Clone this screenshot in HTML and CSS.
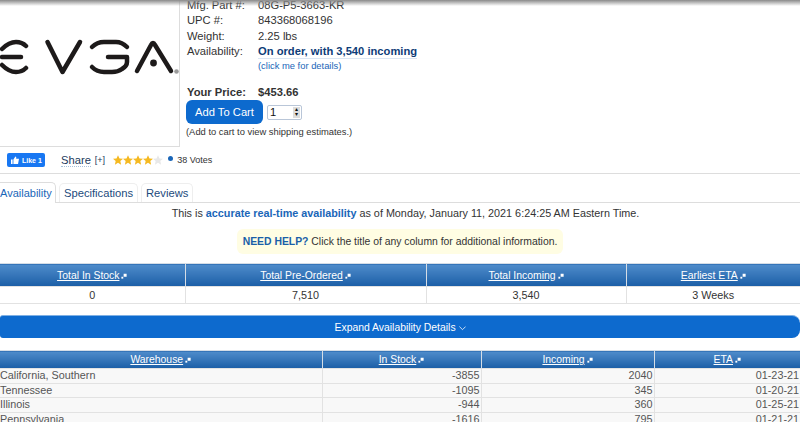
FILE: index.html
```html
<!DOCTYPE html>
<html lang="en">

<head>
    <meta charset="UTF-8">
    <title>EVGA 08G-P5-3663-KR</title>
    <link rel="stylesheet" href="styles.css">
</head>

<body>
    <svg class="defs" width="0" height="0">
        <symbol id="star" viewBox="0 0 20 20">
            <polygon points="10,0.500 13,7 20,7.700 14.700,12.200 16.200,19.500 10,15.700 3.800,19.500 5.300,12.200 0,7.700 7,7"></polygon>
        </symbol>
        <symbol id="sort" viewBox="0 0 8 8">
            <rect x="3.500" y="1" width="4" height="4"></rect>
            <rect x="0.500" y="5" width="2.500" height="2.500"></rect>
        </symbol>
    </svg>
    <div class="top-shadow"></div>
    <div class="page">
        <div class="product">
            <div class="product-image">
                <svg class="logo" width="180" height="80" viewBox="0 0 180 80">
                    <g fill="none" stroke="#1d1a1a" stroke-width="4.500" stroke-linecap="round" stroke-linejoin="round">
                        <path d="M2 49Q9 42 16 42Q22 42 26 46"></path>
                        <path d="M2 57H21"></path>
                        <path d="M2 65Q9 72 16 72Q22 72 26 68"></path>
                        <path d="M47.500 42L62.500 72L80 42"></path>
                        <path d="M92 47Q97 42 104 42H116Q122 42 127 47"></path>
                        <path d="M108 57H127V62Q127 66 122 69Q118 72 112 72H104Q97 72 92 67"></path>
                        <path d="M137 71L151 45Q153 41 155 45L171 71"></path>
                    </g>
                    <circle cx="153.500" cy="63" r="3.400" fill="#1d1a1a"></circle>
                    <circle cx="176.500" cy="71.500" r="2.300" fill="#9a9a9a"></circle>
                </svg>
            </div>
            <div class="product-info">
                <div class="spec-row"><span class="spec-label">Mfg. Part #:</span><span>08G-P5-3663-KR</span></div>
                <div class="spec-row"><span class="spec-label">UPC #:</span><span>843368068196</span></div>
                <div class="spec-row"><span class="spec-label">Weight:</span><span>2.25 lbs</span></div>
                <div class="spec-row"><span class="spec-label">Availability:</span><a class="stock-link">On order, with 3,540 incoming</a></div>
                <div class="spec-row details-row"><span class="spec-label"></span><a class="details-link">(click me for details)</a></div>
                <div class="spec-row price-row"><span class="spec-label">Your Price:</span><span>$453.66</span></div>
                <div class="cart-row">
                    <button class="cart-button">Add To Cart</button>
                    <div class="qty">
                        <span>1</span>
                        <span class="qty-spin"><i>&#9652;</i><i>&#9662;</i></span>
                    </div>
                </div>
                <p class="cart-note">(Add to cart to view shipping estimates.)</p>
            </div>
        </div>

        <div class="social">
            <span class="like">
                <svg width="8" height="8" viewBox="0 0 10 10"><path fill="#fff" d="M0 4.500H2V10H0ZM3 4.500L5.500 0.500Q7 0.500 6.500 3.500H10L8.800 10H3Z"></path></svg>
                Like 1
            </span>
            <span class="share">Share</span>
            <span class="share-more">[+]</span>
            <span class="stars">
                <svg class="star"><use href="#star"></use></svg>
                <svg class="star"><use href="#star"></use></svg>
                <svg class="star"><use href="#star"></use></svg>
                <svg class="star"><use href="#star"></use></svg>
                <svg class="star star-off"><use href="#star"></use></svg>
            </span>
            <span class="info-dot"></span>
            <span class="votes">38 Votes</span>
        </div>

        <div class="tabs">
            <a class="tab tab-active">Availability</a>
            <a class="tab">Specifications</a>
            <a class="tab">Reviews</a>
        </div>

        <p class="realtime">This is <b>accurate real-time availability</b> as of Monday, January 11, 2021 6:24:25 AM Eastern Time.</p>

        <div class="help-wrap">
            <div class="help"><b>NEED HELP?</b> Click the title of any column for additional information.</div>
        </div>

        <table class="grid totals">
            <colgroup>
                <col class="t1"><col class="t2"><col class="t3"><col class="t4">
            </colgroup>
            <thead>
                <tr>
                    <th><a>Total In Stock</a><svg class="sort"><use href="#sort"></use></svg></th>
                    <th><a>Total Pre-Ordered</a><svg class="sort"><use href="#sort"></use></svg></th>
                    <th><a>Total Incoming</a><svg class="sort"><use href="#sort"></use></svg></th>
                    <th><a>Earliest ETA</a><svg class="sort"><use href="#sort"></use></svg></th>
                </tr>
            </thead>
            <tbody>
                <tr>
                    <td>0</td>
                    <td>7,510</td>
                    <td>3,540</td>
                    <td>3 Weeks</td>
                </tr>
            </tbody>
        </table>

        <button class="expand">Expand Availability Details
            <svg width="7" height="5" viewBox="0 0 9 6"><path fill="none" stroke="#fff" d="M0.500 0.500L4.500 4.500L8.500 0.500"></path></svg>
        </button>

        <table class="grid warehouses">
            <colgroup>
                <col class="w1"><col class="w2"><col class="w3"><col class="w4">
            </colgroup>
            <thead>
                <tr>
                    <th><a>Warehouse</a><svg class="sort"><use href="#sort"></use></svg></th>
                    <th><a>In Stock</a><svg class="sort"><use href="#sort"></use></svg></th>
                    <th><a>Incoming</a><svg class="sort"><use href="#sort"></use></svg></th>
                    <th><a>ETA</a><svg class="sort"><use href="#sort"></use></svg></th>
                </tr>
            </thead>
            <tbody>
                <tr><td>California, Southern</td><td>-3855</td><td>2040</td><td>01-23-21</td></tr>
                <tr><td>Tennessee</td><td>-1095</td><td>345</td><td>01-20-21</td></tr>
                <tr><td>Illinois</td><td>-944</td><td>360</td><td>01-25-21</td></tr>
                <tr><td>Pennsylvania</td><td>-1616</td><td>795</td><td>01-21-21</td></tr>
            </tbody>
        </table>
    </div>
</body>

</html>
```

FILE: styles.css
```css
* {
    margin: 0px;
    padding: 0px;
    box-sizing: border-box;
}

html,
body {
    height: 422px;
    overflow: hidden;
}

body {
    font-family: "Liberation Sans", Arial, sans-serif;
    font-size: 11.200px;
    color: #333;
    background: #fff;
}

.defs {
    display: block;
    height: 0;
}

.top-shadow {
    position: absolute;
    top: 0;
    left: 0;
    width: 100%;
    height: 6px;
    background: linear-gradient(#8a8a8a, rgba(255, 255, 255, 0));
}

/* the page is scrolled, the top of the product block is cut off */
.page {
    margin-top: -3px;
}

.product {
    display: flex;
    height: 150px;
}

.product-image {
    width: 180px;
    height: 150px;
    border-right: 1px solid #ddd;
    border-bottom: 1px solid #ddd;
}

.logo {
    display: block;
    margin-top: 3px;
}

.product-info {
    margin-left: 6px;
    padding-left: 1px;
    padding-top: 0.500px;
}

.spec-row {
    display: flex;
    height: 15.500px;
    line-height: 15px;
}

.spec-label {
    width: 71px;
}

.stock-link {
    font-weight: bold;
    color: #0d3c78;
    border-bottom: 1px solid #dbe6f3;
    line-height: 14px;
    height: 15px;
}

.details-row {
    font-size: 9.400px;
    line-height: 12px;
    margin-bottom: 9.500px;
}

.details-link {
    color: #1a66b8;
}

.price-row {
    font-weight: bold;
}

.cart-row {
    display: flex;
    align-items: center;
    margin-left: -1px;
}

.cart-button {
    width: 77px;
    height: 24px;
    border: 0;
    border-radius: 6px;
    background: #0d6ace;
    color: #fff;
    font-family: inherit;
    font-size: 11.200px;
}

.qty {
    display: flex;
    align-items: center;
    justify-content: space-between;
    width: 35px;
    height: 15px;
    margin-left: 4px;
    padding: 0 1px 0 2px;
    border: 1px solid #b9c6d8;
    border-radius: 2px;
    color: #111;
}

.qty-spin {
    display: flex;
    flex-direction: column;
    width: 7px;
    height: 11px;
    background: #ddd;
}

.qty-spin i {
    height: 5.500px;
    font-size: 6px;
    font-style: normal;
    line-height: 5px;
    text-align: center;
}

.cart-note {
    margin-top: 1px;
    margin-left: -1px;
    font-size: 9.400px;
    line-height: 13px;
}

.social {
    display: flex;
    align-items: center;
    height: 27px;
    padding-left: 7px;
    border-bottom: 1px solid #ddd;
}

.like {
    display: flex;
    align-items: center;
    gap: 3px;
    width: 38px;
    height: 14px;
    padding-left: 4px;
    border-radius: 2px;
    background: #1877f2;
    color: #fff;
    font-size: 7px;
    font-weight: bold;
    white-space: nowrap;
}

.share {
    margin-left: 16px;
    color: #1b3a5c;
    border-bottom: 1px dotted #a8c0da;
}

.share-more {
    margin-left: 4px;
    font-size: 9px;
    color: #1b3a5c;
}

.stars {
    display: flex;
    margin-left: 8px;
}

.star {
    width: 10px;
    height: 10px;
    fill: #f5b921;
}

.star-off {
    fill: #e8e8e8;
}

.info-dot {
    width: 5px;
    height: 5px;
    margin-left: 5px;
    margin-top: -3px;
    border-radius: 50%;
    background: #1a66b8;
}

.votes {
    margin-left: 4px;
    font-size: 9px;
}

.tabs {
    display: flex;
    align-items: flex-end;
    gap: 3px;
    height: 20px;
    margin-top: 9px;
    border-bottom: 1px solid #ddd;
}

.tab {
    height: 19px;
    padding: 0 4px;
    line-height: 19px;
    color: #1b4a7c;
    border: 1px solid #eee;
    border-bottom: 0;
    border-radius: 5px 5px 0 0;
}

.tab-active {
    width: 56px;
    height: 21px;
    margin-bottom: -1px;
    padding: 0;
    background: #fff;
    line-height: 20px;
    font-size: 11px;
    color: #1a66b8;
    border-color: #ddd;
    border-left: 0;
    border-radius: 0 5px 0 0;
}

.realtime {
    margin-top: 3px;
    padding-left: 11px;
    line-height: 14px;
    font-size: 10.800px;
    text-align: center;
}

.realtime b {
    color: #1a66b8;
}

.help-wrap {
    display: flex;
    justify-content: center;
    margin-top: 9px;
}

.help {
    height: 25px;
    padding: 0 6px;
    font-size: 10.400px;
    line-height: 25px;
    background: #fffde3;
    border-radius: 6px;
}

.help b {
    color: #1a5fa8;
}

.grid {
    width: 100%;
    table-layout: fixed;
    border-collapse: collapse;
}

.grid th {
    font-size: 10.400px;
    font-weight: normal;
    background: linear-gradient(#4f8ccb, #1b5ea6);
    border: 1px solid #d5dde6;
    border-bottom: 0;
}

.grid th a {
    color: #fff;
    text-decoration: underline;
}

.sort {
    width: 6px;
    height: 6px;
    margin-left: 2px;
    fill: #fff;
}

.grid td {
    font-size: 10.800px;
    border: 1px solid #e2e2e2;
}

.grid th:first-child,
.grid td:first-child {
    border-left: 0;
}

.grid th:last-child,
.grid td:last-child {
    border-right: 0;
}

.totals {
    margin-top: 9px;
}

.totals th {
    height: 23px;
}

.totals td {
    height: 17px;
    line-height: 15px;
    text-align: center;
}

.t1 {
    width: 185px;
}

.t2 {
    width: 241px;
}

.t3 {
    width: 200px;
}

.expand {
    display: block;
    width: 100%;
    height: 23px;
    margin-top: 11px;
    border: 0;
    border-top: 1px solid #7fb0e4;
    border-radius: 3px 8px 8px 3px;
    background: #0d6ace;
    color: #fff;
    font-family: inherit;
    font-size: 10.400px;
}

.warehouses {
    margin-top: 12px;
}

.warehouses th {
    height: 18px;
}

.warehouses td {
    height: 14.500px;
    padding: 0 1px;
    line-height: 13px;
    text-align: right;
    color: #555;
    background: #f8f8f8;
}

.warehouses td:first-child {
    padding: 0;
    text-align: left;
}

.w1 {
    width: 322px;
}

.w2 {
    width: 159px;
}

.w3 {
    width: 173px;
}
```
